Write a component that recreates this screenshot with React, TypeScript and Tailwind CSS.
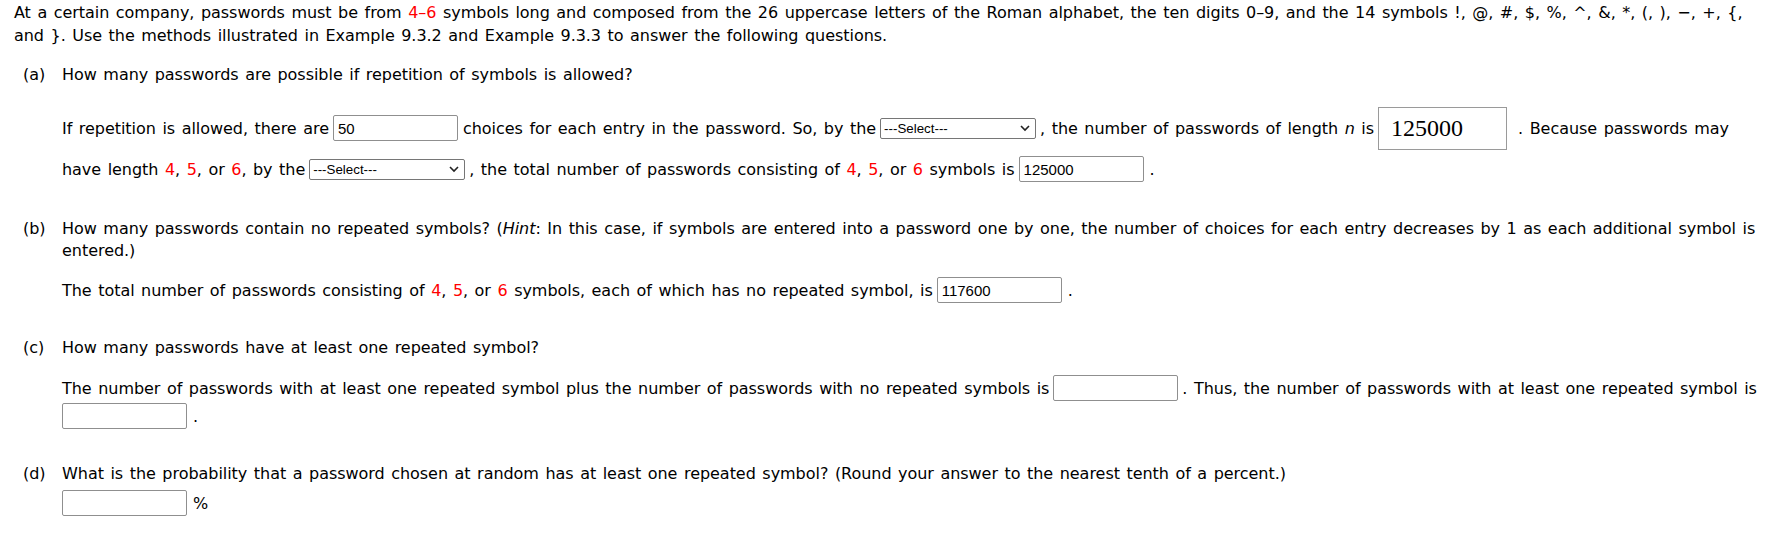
import React from "react";

const R = ({ children }: { children: React.ReactNode }) => (
  <span className="text-[#f00]">{children}</span>
);

const Box = ({ value = "", w = "w-[125px]" }: { value?: string; w?: string }) => (
  <input
    readOnly
    value={value}
    className={`${w} h-[26px] shrink-0 border border-[#8f8f8f] rounded-[2px] bg-white px-[4px] text-[15px] tracking-normal text-black outline-none`}
    style={{ fontFamily: '"Liberation Sans", Arial, sans-serif' }}
  />
);

const Select = () => (
  <span className="relative inline-flex shrink-0">
    <select
      className="w-[156px] h-[21px] appearance-none border border-[#767676] rounded-[2px] bg-white pl-[3px] text-[13.33px] tracking-normal text-black leading-[19px]"
      style={{ fontFamily: '"Liberation Sans", Arial, sans-serif' }}
      defaultValue=""
    >
      <option value="">---Select---</option>
    </select>
    <svg
      className="absolute right-[6px] top-[6px] pointer-events-none"
      width="10"
      height="8"
      viewBox="0 0 10 8"
    >
      <path d="M1 2 L5 6 L9 2" fill="none" stroke="#222" strokeWidth="1.6" />
    </svg>
  </span>
);

const Part = ({ label, children }: { label: string; children: React.ReactNode }) => (
  <div className="flex">
    <div className="w-[48px] shrink-0 pl-[9px]">{label}</div>
    <div className="flex-1">{children}</div>
  </div>
);

export default function App() {
  return (
    <div
      className="w-[1774px] h-[560px] bg-white text-black text-[16px] tracking-[-0.04px] [word-spacing:1.5px] leading-[21px] pl-[14px] pt-[1px]"
      style={{ fontFamily: 'Verdana, "DejaVu Sans", sans-serif' }}
    >
      <div className="whitespace-nowrap leading-[23px]">
        At a certain company, passwords must be from <R>4–6</R> symbols long and composed from the 26
        uppercase letters of the Roman alphabet, the ten digits 0–9, and the 14 symbols !, @, #, $, %, ^,
        &amp;, *, (, ), −, +, {"{"},
        <br />
        and {"}"}. Use the methods illustrated in Example 9.3.2 and Example 9.3.3 to answer the following
        questions.
      </div>

      <div className="mt-[17px]">
        <Part label="(a)">
          <div>How many passwords are possible if repetition of symbols is allowed?</div>

          <div className="mt-[21px] h-[44px] flex items-center gap-[4px] whitespace-nowrap">
            <span>If repetition is allowed, there are</span>
            <Box value="50" />
            <span className="ml-[1px]">choices for each entry in the password. So, by the</span>
            <Select />
            <span>
              , the number of passwords of length <i>n</i> is
            </span>
            <div
              className="w-[129px] h-[43px] shrink-0 border border-[#9a9a9a] flex items-center pl-[12px] text-[24px] tracking-normal"
              style={{ fontFamily: '"Liberation Serif", "Times New Roman", serif' }}
            >
              125000
            </div>
            <span className="ml-[7px]">. Because passwords may</span>
          </div>

          <div className="mt-[6px] h-[26px] flex items-center gap-[4px] whitespace-nowrap">
            <span>
              have length <R>4</R>, <R>5</R>, or <R>6</R>, by the
            </span>
            <Select />
            <span>
              , the total number of passwords consisting of <R>4</R>, <R>5</R>, or <R>6</R> symbols is
            </span>
            <Box value="125000" />
            <span className="ml-[2px]">.</span>
          </div>
        </Part>
      </div>

      <div className="mt-[36px]">
        <Part label="(b)">
          <div className="leading-[22px] whitespace-nowrap">
            How many passwords contain no repeated symbols? (<i>Hint</i>: In this case, if symbols are
            entered into a password one by one, the number of choices for each entry decreases by 1 as
            each additional symbol is
            <br />
            entered.)
          </div>
          <div className="mt-[15px] h-[26px] flex items-center gap-[4px] whitespace-nowrap">
            <span>
              The total number of passwords consisting of <R>4</R>, <R>5</R>, or <R>6</R> symbols, each
              of which has no repeated symbol, is
            </span>
            <Box value="117600" />
            <span className="ml-[2px]">.</span>
          </div>
        </Part>
      </div>

      <div className="mt-[34px]">
        <Part label="(c)">
          <div>How many passwords have at least one repeated symbol?</div>
          <div className="mt-[17px] h-[26px] flex items-center gap-[4px] whitespace-nowrap">
            <span>
              The number of passwords with at least one repeated symbol plus the number of passwords
              with no repeated symbols is
            </span>
            <Box />
            <span>. Thus, the number of passwords with at least one repeated symbol is</span>
          </div>
          <div className="mt-[2px] h-[26px] flex items-center gap-[6px]">
            <Box />
            <span>.</span>
          </div>
        </Part>
      </div>

      <div className="mt-[34px]">
        <Part label="(d)">
          <div>
            What is the probability that a password chosen at random has at least one repeated symbol?
            (Round your answer to the nearest tenth of a percent.)
          </div>
          <div className="mt-[6px] h-[26px] flex items-center gap-[6px]">
            <Box />
            <span>%</span>
          </div>
        </Part>
      </div>
    </div>
  );
}
